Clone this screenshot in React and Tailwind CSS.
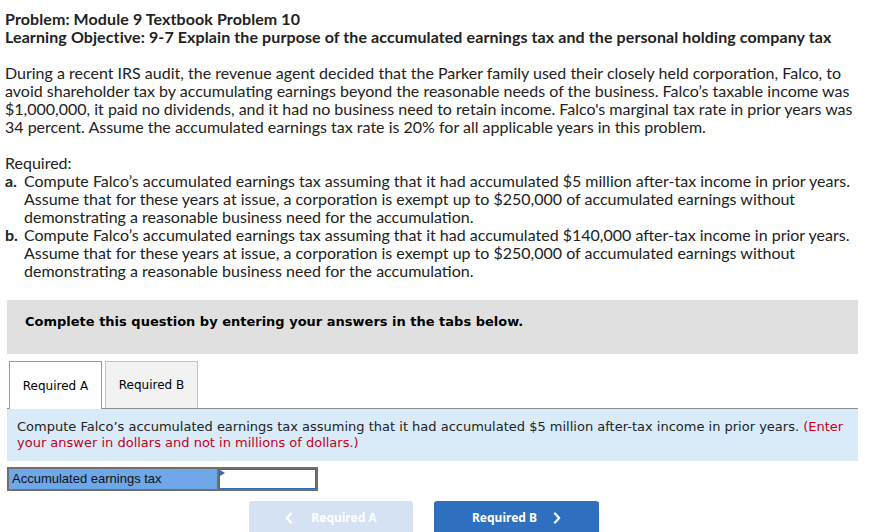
import React from 'react';

const Chevron = ({ dir }) => (
  <svg width="8" height="12" viewBox="0 0 8 12" fill="none" stroke="currentColor" strokeWidth="2.2" strokeLinecap="round" strokeLinejoin="round">
    {dir === 'left' ? <path d="M6 1.5 1.8 6 6 10.5" /> : <path d="M2 1.5 6.2 6 2 10.5" />}
  </svg>
);

const App = () => {
  return (
    <div className="w-[895px] h-[532px] overflow-hidden bg-white text-[#222] relative">
      <div className="ml-[5px] w-[866px] pt-[10px] font-['Lato','Open_Sans',sans-serif] text-[16px] leading-[18px]">
        <p className="font-bold tracking-[0.1px]">Problem: Module 9 Textbook Problem 10</p>
        <p className="font-bold tracking-[0.1px]">Learning Objective: 9-7 Explain the purpose of the accumulated earnings tax and the personal holding company tax</p>

        <p className="mt-[18px]">
          During a recent IRS audit, the revenue agent decided that the Parker family used their closely held corporation, Falco, to avoid shareholder tax by accumulating earnings beyond the reasonable needs of the business. Falco’s taxable income was $1,000,000, it paid no dividends, and it had no business need to retain income. Falco's marginal tax rate in prior years was 34 percent. Assume the accumulated earnings tax rate is 20% for all applicable years in this problem.
        </p>

        <p className="mt-[18px]">Required:</p>
        <div className="flex">
          <span className="w-[19px] shrink-0 font-bold">a.</span>
          <span>Compute Falco’s accumulated earnings tax assuming that it had accumulated $5 million after-tax income in prior years. Assume that for these years at issue, a corporation is exempt up to $250,000 of accumulated earnings without demonstrating a reasonable business need for the accumulation.</span>
        </div>
        <div className="flex">
          <span className="w-[19px] shrink-0 font-bold">b.</span>
          <span>Compute Falco’s accumulated earnings tax assuming that it had accumulated $140,000 after-tax income in prior years. Assume that for these years at issue, a corporation is exempt up to $250,000 of accumulated earnings without demonstrating a reasonable business need for the accumulation.</span>
        </div>
      </div>

      <div className="ml-[7px] w-[851px] mt-[20px] font-['DejaVu_Sans','Verdana',sans-serif]">
        <div className="h-[54px] bg-[#e0e0e0] px-[18px] pt-[14px] text-[13px] leading-[16px] font-bold text-black">
          Complete this question by entering your answers in the tabs below.
        </div>

        <div className="mt-[7px] flex items-end border-b border-[#8f8f8f] h-[48px] pl-[2px] gap-[3px]">
          <div className="w-[93px] h-[48px] -mb-px bg-white border border-b-0 border-[#999] flex items-center justify-center text-[12px] text-black">
            Required A
          </div>
          <div className="w-[93px] h-[47px] bg-[#f2f2f2] border border-b-0 border-[#c4c4c4] flex items-center justify-center text-[12px] text-black">
            Required B
          </div>
        </div>

        <div className="h-[52px] bg-[#d9ebf9] px-[10px] pt-[10px] text-[13px] leading-[16px] text-[#222]">
          <p>
            Compute Falco’s accumulated earnings tax assuming that it had accumulated $5 million after-tax income in prior years. <span className="text-[#c5001a]">(Enter your answer in dollars and not in millions of dollars.)</span>
          </p>
        </div>

        <div className="mt-[6px] flex w-[311px] h-[24px] border-2 border-[#6f6f6f] font-['Liberation_Sans','Arial',sans-serif]">
          <div className="w-[210px] bg-[#6ea8e8] border-r-2 border-[#6f6f6f] flex items-center pl-[3px] text-[13px] text-[#111]">
            Accumulated earnings tax
          </div>
          <div className="flex-1 bg-white border border-[#2f6db5] relative">
            <span className="absolute left-0 top-0 w-0 h-0 border-y-[3px] border-y-transparent border-l-[5px] border-l-[#2f6db5]"></span>
          </div>
        </div>

        <div className="mt-[10px] flex gap-[21px] pl-[242px] font-['Noto_Sans','Open_Sans',sans-serif]">
          <div className="w-[164px] h-[34px] rounded-t-[3px] bg-[#d5e2f3] text-white flex items-center justify-center gap-[18px] text-[12px] font-bold">
            <Chevron dir="left" />
            <span>Required A</span>
          </div>
          <div className="w-[165px] h-[34px] rounded-t-[3px] bg-[#2e6fbf] text-white flex items-center justify-center gap-[16px] text-[12px] font-bold">
            <span>Required B</span>
            <Chevron dir="right" />
          </div>
        </div>
      </div>
    </div>
  );
};

export default App;
